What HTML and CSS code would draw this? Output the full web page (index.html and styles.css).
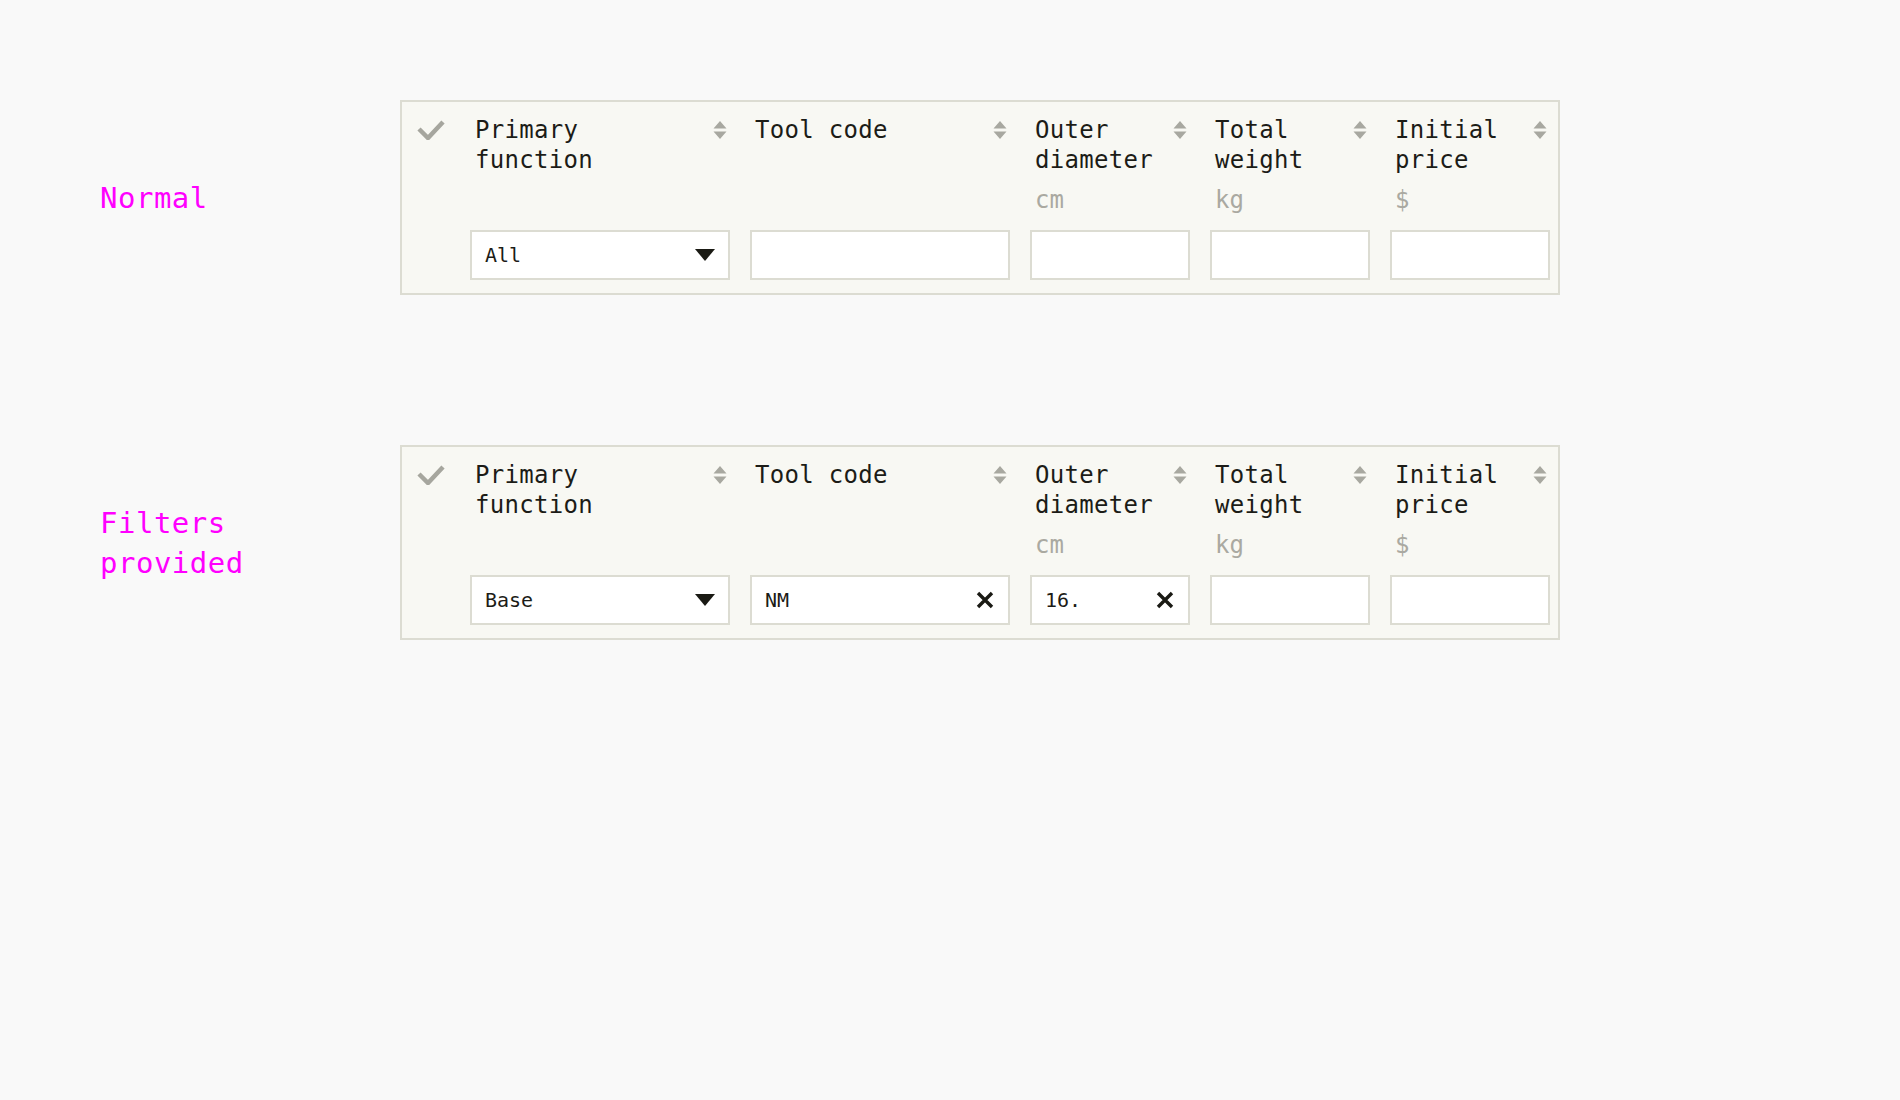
FILE: index.html
```html
<!DOCTYPE html>
<html lang="en">
<head>
    <meta charset="UTF-8">
    <title>Table filters</title>
    <link rel="stylesheet" href="styles.css">
</head>
<body>
    <div class="page">

        <!-- Normal state -->
        <div class="state-row">
            <div class="state-label">Normal</div>
            <div class="filter-panel">
                <div class="check-col">
                    <svg class="check" width="28" height="20" viewBox="0 0 28 20"><path d="M2 9 L11 18 L26 2" fill="none" stroke="currentColor" stroke-width="4.5"/></svg>
                </div>
                <div class="columns">
                    <div class="col wide">
                        <div class="col-head">
                            <span class="title">Primary<br>function</span>
                            <svg class="sort" width="14" height="20" viewBox="0 0 14 20"><path d="M7 1 L13.5 8.5 L0.5 8.5 Z M0.5 11.5 L13.5 11.5 L7 19 Z" fill="currentColor"/></svg>
                        </div>
                        <div class="unit"></div>
                        <div class="field select"><span>All</span><svg class="caret" width="20" height="12" viewBox="0 0 20 12"><path d="M0 0 L20 0 L10 12 Z" fill="currentColor"/></svg></div>
                    </div>
                    <div class="col wide">
                        <div class="col-head">
                            <span class="title">Tool code</span>
                            <svg class="sort" width="14" height="20" viewBox="0 0 14 20"><path d="M7 1 L13.5 8.5 L0.5 8.5 Z M0.5 11.5 L13.5 11.5 L7 19 Z" fill="currentColor"/></svg>
                        </div>
                        <div class="unit"></div>
                        <div class="field"></div>
                    </div>
                    <div class="col">
                        <div class="col-head">
                            <span class="title">Outer<br>diameter</span>
                            <svg class="sort" width="14" height="20" viewBox="0 0 14 20"><path d="M7 1 L13.5 8.5 L0.5 8.5 Z M0.5 11.5 L13.5 11.5 L7 19 Z" fill="currentColor"/></svg>
                        </div>
                        <div class="unit">cm</div>
                        <div class="field"></div>
                    </div>
                    <div class="col">
                        <div class="col-head">
                            <span class="title">Total<br>weight</span>
                            <svg class="sort" width="14" height="20" viewBox="0 0 14 20"><path d="M7 1 L13.5 8.5 L0.5 8.5 Z M0.5 11.5 L13.5 11.5 L7 19 Z" fill="currentColor"/></svg>
                        </div>
                        <div class="unit">kg</div>
                        <div class="field"></div>
                    </div>
                    <div class="col">
                        <div class="col-head">
                            <span class="title">Initial<br>price</span>
                            <svg class="sort" width="14" height="20" viewBox="0 0 14 20"><path d="M7 1 L13.5 8.5 L0.5 8.5 Z M0.5 11.5 L13.5 11.5 L7 19 Z" fill="currentColor"/></svg>
                        </div>
                        <div class="unit">$</div>
                        <div class="field"></div>
                    </div>
                </div>
            </div>
        </div>

        <!-- Filters provided -->
        <div class="state-row">
            <div class="state-label">Filters<br>provided</div>
            <div class="filter-panel">
                <div class="check-col">
                    <svg class="check" width="28" height="20" viewBox="0 0 28 20"><path d="M2 9 L11 18 L26 2" fill="none" stroke="currentColor" stroke-width="4.5"/></svg>
                </div>
                <div class="columns">
                    <div class="col wide">
                        <div class="col-head">
                            <span class="title">Primary<br>function</span>
                            <svg class="sort" width="14" height="20" viewBox="0 0 14 20"><path d="M7 1 L13.5 8.5 L0.5 8.5 Z M0.5 11.5 L13.5 11.5 L7 19 Z" fill="currentColor"/></svg>
                        </div>
                        <div class="unit"></div>
                        <div class="field select"><span>Base</span><svg class="caret" width="20" height="12" viewBox="0 0 20 12"><path d="M0 0 L20 0 L10 12 Z" fill="currentColor"/></svg></div>
                    </div>
                    <div class="col wide">
                        <div class="col-head">
                            <span class="title">Tool code</span>
                            <svg class="sort" width="14" height="20" viewBox="0 0 14 20"><path d="M7 1 L13.5 8.5 L0.5 8.5 Z M0.5 11.5 L13.5 11.5 L7 19 Z" fill="currentColor"/></svg>
                        </div>
                        <div class="unit"></div>
                        <div class="field"><span>NM</span><svg class="clear" width="18" height="18" viewBox="0 0 18 18"><path d="M2 2 L16 16 M16 2 L2 16" stroke="currentColor" stroke-width="3.4"/></svg></div>
                    </div>
                    <div class="col">
                        <div class="col-head">
                            <span class="title">Outer<br>diameter</span>
                            <svg class="sort" width="14" height="20" viewBox="0 0 14 20"><path d="M7 1 L13.5 8.5 L0.5 8.5 Z M0.5 11.5 L13.5 11.5 L7 19 Z" fill="currentColor"/></svg>
                        </div>
                        <div class="unit">cm</div>
                        <div class="field"><span>16.</span><svg class="clear" width="18" height="18" viewBox="0 0 18 18"><path d="M2 2 L16 16 M16 2 L2 16" stroke="currentColor" stroke-width="3.4"/></svg></div>
                    </div>
                    <div class="col">
                        <div class="col-head">
                            <span class="title">Total<br>weight</span>
                            <svg class="sort" width="14" height="20" viewBox="0 0 14 20"><path d="M7 1 L13.5 8.5 L0.5 8.5 Z M0.5 11.5 L13.5 11.5 L7 19 Z" fill="currentColor"/></svg>
                        </div>
                        <div class="unit">kg</div>
                        <div class="field"></div>
                    </div>
                    <div class="col">
                        <div class="col-head">
                            <span class="title">Initial<br>price</span>
                            <svg class="sort" width="14" height="20" viewBox="0 0 14 20"><path d="M7 1 L13.5 8.5 L0.5 8.5 Z M0.5 11.5 L13.5 11.5 L7 19 Z" fill="currentColor"/></svg>
                        </div>
                        <div class="unit">$</div>
                        <div class="field"></div>
                    </div>
                </div>
            </div>
        </div>

    </div>
</body>
</html>
```

FILE: styles.css
```css
body {
    margin: 0;
    background-color: #f9f9f9;
    font-family: "DejaVu Sans Mono", "Liberation Mono", monospace;
    color: #1c1c17;
}

.page {
    display: flex;
    flex-direction: column;
    gap: 150px;
    padding: 100px 0 0 100px;
}

.state-row {
    display: flex;
    align-items: center;
}

.state-label {
    width: 300px;
    font-size: 29px;
    line-height: 40px;
    letter-spacing: 0.5px;
    color: #ff00ff;
}

.filter-panel {
    width: 1160px;
    box-sizing: border-box;
    display: flex;
    padding: 13px 8px 13px 0;
    background-color: #f8f8f3;
    border: 2px solid #dcdcd2;
}

.check-col {
    width: 68px;
    flex-shrink: 0;
}

.check {
    display: block;
    margin: 5px 0 0 15px;
    color: #a6a69e;
}

.columns {
    display: flex;
    gap: 20px;
}

.col {
    width: 160px;
    display: flex;
    flex-direction: column;
}

.col.wide {
    width: 260px;
}

.col-head {
    display: flex;
    justify-content: space-between;
    align-items: flex-start;
    padding: 0 3px 0 5px;
    height: 60px;
}

.title {
    font-size: 24px;
    line-height: 30px;
    letter-spacing: 0.3px;
}

.sort {
    display: block;
    margin-top: 5px;
    color: #a8a8a0;
    flex-shrink: 0;
}

.unit {
    height: 30px;
    margin-top: 10px;
    padding-left: 5px;
    font-size: 24px;
    line-height: 30px;
    color: #aaa9a1;
}

.field {
    height: 50px;
    margin-top: 15px;
    box-sizing: border-box;
    display: flex;
    align-items: center;
    justify-content: space-between;
    padding: 0 14px 0 13px;
    background-color: #fff;
    border: 2px solid #dcdcd2;
    font-size: 20px;
    color: #1c1c17;
}

.field.select {
    padding-right: 13px;
}

.caret,
.clear {
    display: block;
    color: #1a1a14;
}
```
